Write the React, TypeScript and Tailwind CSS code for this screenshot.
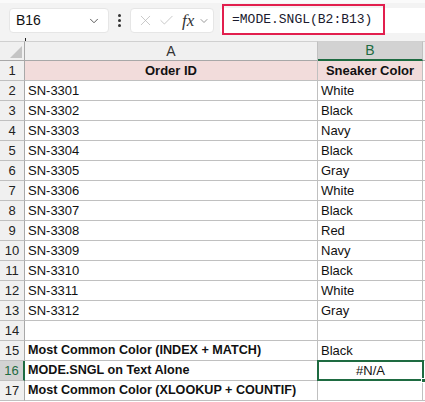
import { Check, ChevronDown, X } from "lucide-react";

const rows = [
  { id: "SN-3301", color: "White" },
  { id: "SN-3302", color: "Black" },
  { id: "SN-3303", color: "Navy" },
  { id: "SN-3304", color: "Black" },
  { id: "SN-3305", color: "Gray" },
  { id: "SN-3306", color: "White" },
  { id: "SN-3307", color: "Black" },
  { id: "SN-3308", color: "Red" },
  { id: "SN-3309", color: "Navy" },
  { id: "SN-3310", color: "Black" },
  { id: "SN-3311", color: "White" },
  { id: "SN-3312", color: "Gray" },
];

function RowHead({ n, active }: { n: number; active?: boolean }) {
  return (
    <div
      className={
        active
          ? "w-[25px] shrink-0 h-full flex items-center justify-center bg-[#d2d2d2] text-[#1e6b41] border-r-2 border-r-[#1e6b41] border-b border-b-[#c0c0c0]"
          : "w-[25px] shrink-0 h-full flex items-center justify-center bg-[#f0f0f0] text-[#222] border-r border-r-[#a8a8a8] border-b border-b-[#c0c0c0]"
      }
    >
      {n}
    </div>
  );
}

function Row({
  n,
  a,
  b,
  bold,
  active,
  pink,
}: {
  n: number;
  a?: string;
  b?: string;
  bold?: boolean;
  active?: boolean;
  pink?: boolean;
}) {
  return (
    <div className="flex h-[20px]">
      <RowHead n={n} active={active} />
      <div
        className={`w-[293px] shrink-0 h-full flex items-center px-[3px] whitespace-nowrap border-r border-b border-[#c0c0c0] ${
          pink ? "bg-[#f2dcdb] justify-center font-bold" : bold ? "font-bold text-[12.6px]" : ""
        }`}
      >
        {a}
      </div>
      <div
        className={`w-[105px] shrink-0 h-full flex items-center px-[3px] whitespace-nowrap border-r border-b border-[#c0c0c0] ${
          pink ? "bg-[#f2dcdb] justify-center font-bold" : ""
        }`}
      >
        {b}
      </div>
      <div className="flex-1 h-full border-b border-[#c0c0c0]" />
    </div>
  );
}

export default function App() {
  return (
    <div className="w-[425px] h-[402px] overflow-hidden bg-white text-[13px] text-[#111] font-['Liberation_Sans',Arial,sans-serif]">
      {/* formula bar */}
      <div className="h-[41px] bg-[#f3f3f3] border-t-[3px] border-[#fafafa] flex items-start pt-[5px] pl-[9px] relative">
        <div className="w-[100px] h-[25px] bg-white rounded-[4px] border border-[#e6e6e6] flex items-center justify-between pl-[6px] pr-[7px]">
          <span className="text-[14px] text-[#111]">B16</span>
          <ChevronDown size={14} strokeWidth={1.5} className="text-[#444]" />
        </div>
        <div className="w-[21px] h-[25px] flex flex-col items-center justify-center gap-[2px]">
          <span className="w-[3px] h-[3px] rounded-full bg-[#333]" />
          <span className="w-[3px] h-[3px] rounded-full bg-[#333]" />
          <span className="w-[3px] h-[3px] rounded-full bg-[#333]" />
        </div>
        <div className="w-[84px] h-[25px] bg-white rounded-[4px] border border-[#e6e6e6] flex items-center pl-[6px] gap-[4px]">
          <X size={17} strokeWidth={1} className="text-[#b4b4b4]" />
          <Check size={17} strokeWidth={1} className="text-[#b4b4b4]" />
          <span className="ml-[3px] italic text-[17px] leading-none text-[#333] font-['Liberation_Serif',serif]">fx</span>
          <ChevronDown size={12} strokeWidth={1.5} className="text-[#777]" />
        </div>
        <div className="ml-[6px] flex-1 h-[25px] bg-white rounded-l-[4px]" />
        <div className="absolute left-[222px] top-[1px] w-[163px] h-[31px] border-2 border-[#e21f4e] flex items-center pl-[8px] text-[13px] text-[#1a1a2e] font-['Liberation_Mono',monospace]">
          =MODE.SNGL(B2:B13)
        </div>
        <span className="absolute left-[25px] bottom-0 w-[1px] h-[3px] bg-[#222]" />
      </div>

      {/* column headers */}
      <div className="flex h-[20px] text-[#333] text-[14px]">
        <div className="w-[25px] shrink-0 h-full bg-[#f0f0f0] border-r border-b border-[#a8a8a8] relative border-t border-t-[#d0d0d0]">
          <div className="absolute right-[2px] bottom-[2px] w-0 h-0 border-l-[12px] border-l-transparent border-b-[12px] border-b-[#c4c4c4]" />
        </div>
        <div className="w-[293px] shrink-0 h-full bg-[#f0f0f0] border-r border-[#c0c0c0] border-b border-b-[#a8a8a8] border-t border-t-[#d0d0d0] flex items-center justify-center">
          A
        </div>
        <div className="w-[105px] shrink-0 h-full bg-[#d2d2d2] border-r border-[#c0c0c0] border-b-2 border-b-[#1e6b41] border-t border-t-[#d0d0d0] flex items-center justify-center text-[#1e6b41]">
          B
        </div>
        <div className="flex-1 h-full bg-[#f0f0f0] border-b border-[#a8a8a8] border-t border-t-[#d0d0d0]" />
      </div>

      <Row n={1} a="Order ID" b="Sneaker Color" pink />
      {rows.map((r, i) => (
        <Row key={r.id} n={i + 2} a={r.id} b={r.color} />
      ))}
      <Row n={14} />
      <Row n={15} a="Most Common Color (INDEX + MATCH)" b="Black" bold />
      <div className="flex h-[20px]">
        <RowHead n={16} active />
        <div className="w-[293px] shrink-0 h-full flex items-center px-[3px] whitespace-nowrap border-r border-b border-[#c0c0c0] font-bold text-[12.6px]">
          MODE.SNGL on Text Alone
        </div>
        <div className="w-[105px] shrink-0 h-full relative border-b border-[#c0c0c0]">
          <div className="absolute -left-[1px] -top-[1px] -right-[1px] -bottom-[1px] border-2 border-[#1e6b41] flex items-center justify-center">
            #N/A
          </div>
          <div className="absolute -right-[3px] -bottom-[3px] w-[5px] h-[5px] bg-[#1e6b41] border border-white" />
        </div>
        <div className="flex-1 h-full border-b border-[#c0c0c0]" />
      </div>
      <Row n={17} a="Most Common Color (XLOOKUP + COUNTIF)" bold />
    </div>
  );
}
